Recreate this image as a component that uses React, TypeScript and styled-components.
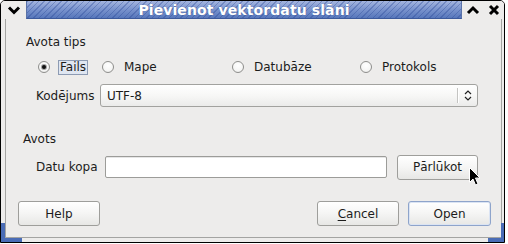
import * as React from 'react';
import styled, { createGlobalStyle, css } from 'styled-components';

const GlobalStyle = createGlobalStyle`
	html, body {
		margin: 0;
		padding: 0;
		background: #ffffff;
	}
	body {
		font-family: "DejaVu Sans", "Liberation Sans", sans-serif;
		font-size: 12px;
		color: #1c1c1c;
	}
`

const Window = styled.div`
	position: relative;
	width: 505px;
	height: 243px;
	box-sizing: border-box;
	border: 1px solid #000;
	border-radius: 5px 5px 0 0;
	background: #edeceb;
	display: flex;
	flex-direction: column;
	overflow: hidden;
`

const TitleBar = styled.div`
	display: flex;
	height: 18px;
	flex-shrink: 0;
`

const TitleButton = styled.div<{ $w: number }>`
	width: ${p => p.$w}px;
	height: 18px;
	display: flex;
	align-items: center;
	justify-content: center;
	background: #edeceb;
`

const TitleCaption = styled.div`
	flex: 1;
	height: 17px;
	border-bottom: 1px solid #3d5a9c;
	border-left: 1px solid #5a72a8;
	border-right: 1px solid #5a72a8;
	display: flex;
	align-items: center;
	justify-content: center;
	color: #ffffff;
	font-weight: bold;
	font-size: 14px;
	letter-spacing: 0.1px;
	text-shadow: 0 0 1px rgba(30, 50, 100, 0.5);
	background:
		repeating-linear-gradient(135deg, rgba(40, 70, 150, 0.35) 0px, rgba(40, 70, 150, 0.35) 1px, transparent 1px, transparent 4px),
		linear-gradient(180deg, #a5b6df 0%, #7d96cf 45%, #5777bb 100%);
`

const Frame = styled.div`
	flex: 1;
	display: flex;
	padding: 0 2px 4px 4px;
`

const Client = styled.div`
	flex: 1;
	border: 1px solid #a4a4a2;
	border-top: none;
	padding: 16px 10px 0 0;
	display: flex;
	flex-direction: column;
`

const SectionTitle = styled.div<{ $indent: number; $top?: number }>`
	margin-left: ${p => p.$indent}px;
	margin-top: ${p => p.$top || 0}px;
	line-height: 14px;
	height: 14px;
`

const RadioRow = styled.div`
	display: grid;
	grid-template-columns: 64px 130px 128px auto;
	margin: 10px 0 0 32px;
	height: 16px;
	align-items: center;
`

const RadioItem = styled.label`
	display: flex;
	align-items: center;
	gap: 8px;
`

const RadioCircle = styled.span<{ $checked?: boolean }>`
	width: 12px;
	height: 12px;
	box-sizing: border-box;
	border-radius: 50%;
	border: 1px solid #8e8e8c;
	background: radial-gradient(circle at 50% 35%, #ffffff 0%, #f6f6f5 60%, #e4e4e2 100%);
	display: flex;
	align-items: center;
	justify-content: center;
	&::after {
		content: '';
		width: 4px;
		height: 4px;
		border-radius: 50%;
		background: ${p => (p.$checked ? '#111' : 'transparent')};
		box-shadow: ${p => (p.$checked ? '0 0 0 1px rgba(0,0,0,0.35)' : 'none')};
	}
`

const RadioText = styled.span<{ $focused?: boolean }>`
	padding: 0 1px;
	line-height: 13px;
	border: 1px solid transparent;
	${p => p.$focused && css`
		background: #dfe6f1;
		border-color: #8d9bb3;
	`}
`

const FieldRow = styled.div<{ $top: number; $height: number }>`
	display: flex;
	align-items: center;
	margin: ${p => p.$top}px 0 0 30px;
	height: ${p => p.$height}px;
`

const FieldLabel = styled.span<{ $w: number }>`
	width: ${p => p.$w}px;
	flex-shrink: 0;
`

const Combo = styled.div`
	position: relative;
	width: 378px;
	height: 23px;
	box-sizing: border-box;
	border: 1px solid #a2a29f;
	border-radius: 3px;
	background: linear-gradient(180deg, #ffffff 0%, #f7f7f6 50%, #ebebea 100%);
	display: flex;
	align-items: center;
	padding-left: 6px;
`

const ComboSeparator = styled.span`
	margin-left: auto;
	width: 1px;
	height: 15px;
	background: #c4c4c2;
	box-shadow: 1px 0 0 #ffffff;
`

const ComboArrows = styled.span`
	width: 19px;
	display: flex;
	align-items: center;
	justify-content: center;
`

const Entry = styled.div`
	width: 282px;
	height: 22px;
	box-sizing: border-box;
	border: 1px solid #9c9c99;
	border-radius: 2px;
	background: #ffffff;
	box-shadow: inset 0 1px 0 #e6e6e6;
`

const Button = styled.div<{ $w: number; $default?: boolean }>`
	width: ${p => p.$w}px;
	height: 25px;
	box-sizing: border-box;
	border: 1px solid ${p => (p.$default ? '#8ea4cb' : '#9e9e9b')};
	border-radius: 3px;
	background: linear-gradient(180deg, #ffffff 0%, #f5f5f4 50%, #e7e7e5 100%);
	display: flex;
	align-items: center;
	justify-content: center;
	${p => p.$default && css`
		box-shadow: inset 0 0 0 1px #dbe4f3;
	`}
`

const ButtonRow = styled.div`
	display: flex;
	align-items: center;
	justify-content: space-between;
	margin: 22px 0 0 12px;
`

const ButtonGroup = styled.div`
	display: flex;
	gap: 9px;
`

const Mnemonic = styled.span`
	text-decoration: underline;
	text-underline-offset: 2px;
`

const ResizeCorner = styled.div<{ $side: 'left' | 'right' }>`
	position: absolute;
	bottom: 0;
	${p => p.$side}: 0;
	width: ${p => (p.$side === 'left' ? 21 : 16)}px;
	height: 19px;
	box-sizing: border-box;
	border-bottom: 4px solid #4a6cb6;
	border-${p => p.$side}: ${p => (p.$side === 'left' ? 4 : 3)}px solid #4a6cb6;
`

const Pointer = styled.svg`
	position: absolute;
	left: 467px;
	top: 165px;
`

function ChevronDown() {
	return (
		<svg width="14" height="10" viewBox="0 0 14 10">
			<polyline points="2,2.5 7,7.5 12,2.5" fill="none" stroke="#000" strokeWidth="3" />
		</svg>
	)
}

function ChevronUp() {
	return (
		<svg width="14" height="10" viewBox="0 0 14 10">
			<polyline points="2,8 7,3 12,8" fill="none" stroke="#000" strokeWidth="3" />
		</svg>
	)
}

function CloseIcon() {
	return (
		<svg width="12" height="12" viewBox="0 0 12 12">
			<path d="M2 2 L10 10 M10 2 L2 10" stroke="#000" strokeWidth="3" />
		</svg>
	)
}

export default function App() {
	return (
		<>
			<GlobalStyle />
			<Window>
				<TitleBar>
					<TitleButton $w={25}>
						<ChevronDown />
					</TitleButton>
					<TitleCaption>Pievienot vektordatu slāni</TitleCaption>
					<TitleButton $w={21}>
						<ChevronUp />
					</TitleButton>
					<TitleButton $w={21}>
						<CloseIcon />
					</TitleButton>
				</TitleBar>
				<Frame>
					<Client>
						<SectionTitle $indent={20}>Avota tips</SectionTitle>
						<RadioRow>
							<RadioItem>
								<RadioCircle $checked />
								<RadioText $focused>Fails</RadioText>
							</RadioItem>
							<RadioItem>
								<RadioCircle />
								<RadioText>Mape</RadioText>
							</RadioItem>
							<RadioItem>
								<RadioCircle />
								<RadioText>Datubāze</RadioText>
							</RadioItem>
							<RadioItem>
								<RadioCircle />
								<RadioText>Protokols</RadioText>
							</RadioItem>
						</RadioRow>
						<FieldRow $top={9} $height={23}>
							<FieldLabel $w={64}>Kodējums</FieldLabel>
							<Combo>
								UTF-8
								<ComboSeparator />
								<ComboArrows>
									<svg width="8" height="13" viewBox="0 0 8 13">
										<path d="M1 5 L4 2 L7 5 M1 8 L4 11 L7 8" fill="none" stroke="#222" strokeWidth="1.2" />
									</svg>
								</ComboArrows>
							</Combo>
						</FieldRow>
						<SectionTitle $indent={17} $top={25}>Avots</SectionTitle>
						<FieldRow $top={9} $height={24}>
							<FieldLabel $w={69}>Datu kopa</FieldLabel>
							<Entry />
							<Button $w={81} style={{ marginLeft: 10 }}>Pārlūkot</Button>
						</FieldRow>
						<ButtonRow>
							<Button $w={82}>Help</Button>
							<ButtonGroup>
								<Button $w={82}><span><Mnemonic>C</Mnemonic>ancel</span></Button>
								<Button $w={83} $default>Open</Button>
							</ButtonGroup>
						</ButtonRow>
					</Client>
				</Frame>
				<ResizeCorner $side="left" />
				<ResizeCorner $side="right" />
				<Pointer width="14" height="22" viewBox="0 0 14 22">
					<path d="M1.5 1.5 L1.5 16.5 L5 13 L7.5 19 L10 18 L7.5 12 L12 12 Z" fill="#000" stroke="#fff" strokeWidth="1" />
				</Pointer>
			</Window>
		</>
	)
}
